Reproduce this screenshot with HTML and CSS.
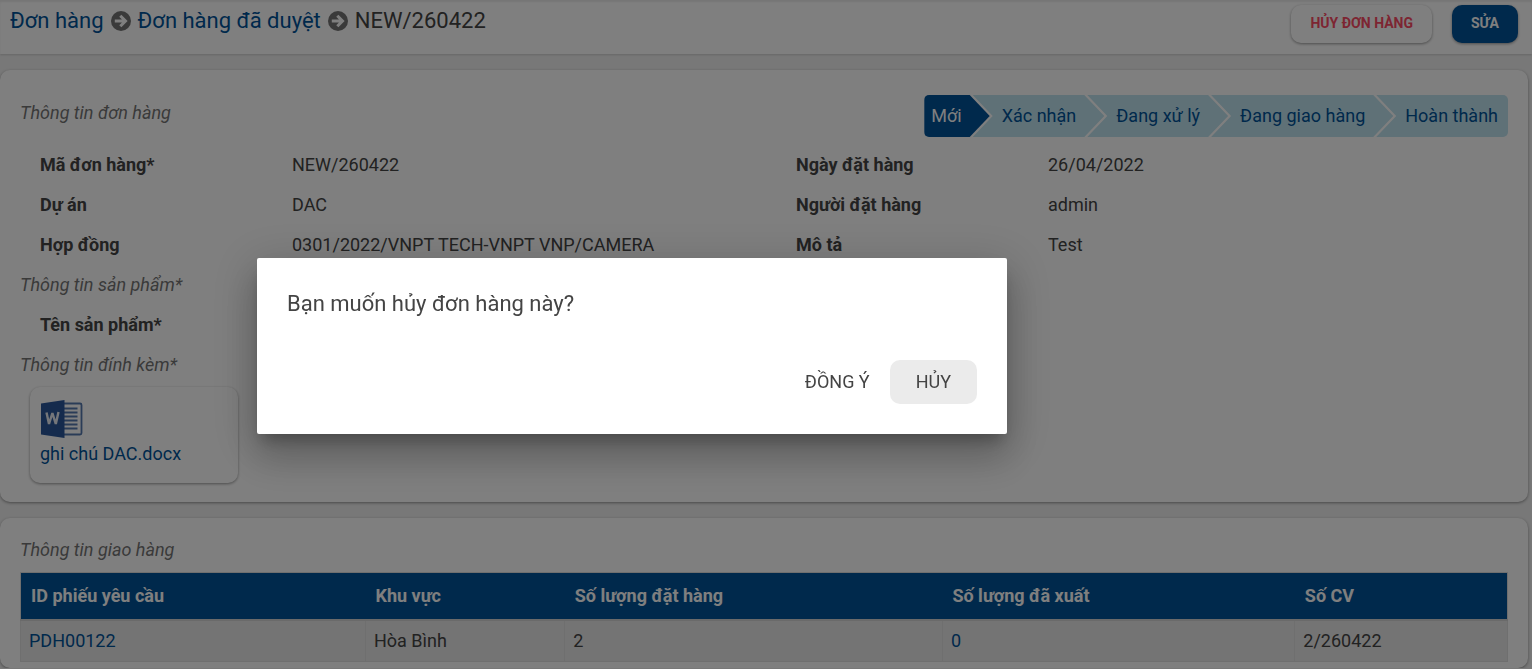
FILE: index.html
```html
<!DOCTYPE html>
<html lang="vi">
<head>
<meta charset="utf-8">
<title>NEW/260422</title>
<link rel="stylesheet" href="styles.css">
</head>
<body>
<header class="topbar">
  <nav class="breadcrumb" aria-label="Breadcrumb">
    <a href="#orders">Đơn hàng</a>
    <svg class="crumb-icon" viewBox="0 0 20 20" aria-hidden="true"><circle cx="10" cy="10" r="10"/><path d="M3.800 10H14M9.300 4.800l5.200 5.200-5.200 5.200"/></svg>
    <a href="#approved">Đơn hàng đã duyệt</a>
    <svg class="crumb-icon" viewBox="0 0 20 20" aria-hidden="true"><circle cx="10" cy="10" r="10"/><path d="M3.800 10H14M9.300 4.800l5.200 5.200-5.200 5.200"/></svg>
    <span>NEW/260422</span>
  </nav>
  <div class="actions">
    <button type="button" class="btn btn-danger">HỦY ĐƠN HÀNG</button>
    <button type="button" class="btn btn-primary">SỬA</button>
  </div>
</header>
<main class="content">
  <section class="card">
    <div class="card-head">
      <h2 class="section-title">Thông tin đơn hàng</h2>
      <ol class="steps">
        <li><button type="button" class="step step-first step-active" aria-current="step">Mới</button></li>
        <li><button type="button" class="step">Xác nhận</button></li>
        <li><button type="button" class="step">Đang xử lý</button></li>
        <li><button type="button" class="step">Đang giao hàng</button></li>
        <li><button type="button" class="step step-last">Hoàn thành</button></li>
      </ol>
    </div>
    <dl class="fields">
      <dt>Mã đơn hàng*</dt><dd>NEW/260422</dd>
      <dt>Ngày đặt hàng</dt><dd>26/04/2022</dd>
      <dt>Dự án</dt><dd>DAC</dd>
      <dt>Người đặt hàng</dt><dd>admin</dd>
      <dt>Hợp đồng</dt><dd>0301/2022/VNPT TECH-VNPT VNP/CAMERA</dd>
      <dt>Mô tả</dt><dd>Test</dd>
    </dl>
    <h2 class="section-title">Thông tin sản phẩm*</h2>
    <dl class="fields">
      <dt>Tên sản phẩm*</dt><dd></dd>
    </dl>
    <h2 class="section-title">Thông tin đính kèm*</h2>
    <a class="file" href="#file">
      <svg class="file-icon" viewBox="0 0 42 40" aria-hidden="true">
        <rect x="20" y="4.500" width="20.500" height="31" rx="1.500" fill="#fff" stroke="#2b579a" stroke-opacity=".8" stroke-width="1.800"/>
        <path d="M22 9.500h14.500M22 13.500h14.500M22 17.500h14.500M22 21.500h14.500M22 25.500h14.500M22 29.500h14.500" stroke="#2b579a" stroke-opacity=".8" stroke-width="2"/>
        <path d="M0 4.500L23.500 1v38L0 35.500z" fill="#2b579a"/>
        <path d="M5.500 13.500L8 25l3.400-11 3.400 11 2.700-12" fill="none" stroke="#e8edf5" stroke-width="2.400" stroke-linejoin="bevel"/>
      </svg>
      <span>ghi chú DAC.docx</span>
    </a>
  </section>
  <section class="card card-delivery">
    <h2 class="section-title">Thông tin giao hàng</h2>
    <table class="grid">
      <colgroup><col class="col-id"><col class="col-area"><col class="col-ordered"><col class="col-shipped"><col></colgroup>
      <thead>
        <tr><th scope="col">ID phiếu yêu cầu</th><th scope="col">Khu vực</th><th scope="col">Số lượng đặt hàng</th><th scope="col">Số lượng đã xuất</th><th scope="col">Số CV</th></tr>
      </thead>
      <tbody>
        <tr><td><a href="#PDH00122">PDH00122</a></td><td>Hòa Bình</td><td>2</td><td><a href="#shipped">0</a></td><td>2/260422</td></tr>
      </tbody>
    </table>
  </section>
</main>
<div class="overlay"></div>
<div class="dialog" role="dialog" aria-modal="true" aria-labelledby="dialog-title">
  <h1 class="dialog-title" id="dialog-title">Bạn muốn hủy đơn hàng này?</h1>
  <div class="dialog-actions">
    <button type="button" class="dialog-btn">ĐỒNG Ý</button>
    <button type="button" class="dialog-btn dialog-btn-cancel">HỦY</button>
  </div>
</div>
</body>
</html>
```
FILE: styles.css
```css
* { box-sizing: border-box; }

body {
  margin: 0;
  background: #f0f0f0;
  color: #444;
  font: 400 18px/24px Roboto, "Noto Sans", sans-serif;
}

a { color: #005298; text-decoration: none; }
button { font-family: inherit; cursor: pointer; }
h1, h2, dl, dd, ol { margin: 0; padding: 0; }

.topbar {
  display: flex;
  justify-content: space-between;
  align-items: flex-start;
  height: 54px;
  padding: 5px 14px 0 10px;
  background: #fff;
  box-shadow: 0 1px 2px rgba(0, 0, 0, .15), inset 0 2px 2px rgba(0, 0, 0, .08);
}

.breadcrumb {
  display: flex;
  align-items: center;
  gap: 7px;
  font-size: 22px;
  line-height: 32px;
}

.crumb-icon { width: 20px; height: 20px; fill: #757575; }
.crumb-icon path { fill: none; stroke: #fff; stroke-width: 3; }

.actions { display: flex; gap: 20px; }

.btn {
  height: 38px;
  padding: 0 19px 2px;
  border: 0;
  border-radius: 10px;
  font-size: 14px;
  font-weight: 700;
  box-shadow: 0 1px 3px rgba(0, 0, 0, .4);
}
.btn-danger { background: #fff; color: #fb4b64; }
.btn-primary { background: #005298; color: #fff; }

.content {
  display: flex;
  flex-direction: column;
  gap: 16px;
  padding: 16px 4px 0 0;
}

.card {
  padding: 25px 20px 19px;
  border-radius: 10px;
  background: #fff;
  box-shadow: 0 1px 3px rgba(0, 0, 0, .4);
}
.card-delivery { padding: 12px 20px 6px; }

.card-head {
  display: flex;
  justify-content: space-between;
  align-items: flex-start;
  height: 50px;
}
.card-head .section-title { line-height: 36px; }

.section-title {
  color: #757575;
  font-size: 18px;
  font-style: italic;
  font-weight: 400;
  line-height: 40px;
}

.steps { display: flex; list-style: none; }
.steps li + li { margin-left: -17px; }

.step {
  height: 42px;
  padding: 0 28px 2px 29px;
  border: 0;
  background: #bee2ee;
  color: #005298;
  font-size: 18px;
  clip-path: polygon(0 0, calc(100% - 20px) 0, 100% 50%, calc(100% - 20px) 100%, 0 100%, 20px 50%);
}
.step-first {
  padding-left: 7px;
  border-radius: 5px 0 0 5px;
  clip-path: polygon(0 0, calc(100% - 20px) 0, 100% 50%, calc(100% - 20px) 100%, 0 100%);
}
.step-last {
  padding-right: 10px;
  border-radius: 0 5px 5px 0;
  clip-path: polygon(0 0, 100% 0, 100% 100%, 0 100%, 20px 50%);
}
.step-active { background: #005298; color: #fff; }

.fields {
  display: grid;
  grid-template-columns: 63fr 126fr 63fr 115fr;
  padding-left: 20px;
  line-height: 40px;
}
.fields dt { font-weight: 700; }

.file {
  display: flex;
  flex-direction: column;
  gap: 3px;
  width: 208px;
  height: 96px;
  margin: 2px 0 0 10px;
  padding: 12px 10px;
  border-radius: 10px;
  box-shadow: 0 1px 3px rgba(0, 0, 0, .4);
}
.file-icon { width: 42px; height: 40px; margin-left: 1px; }

.grid {
  width: 100%;
  margin-top: 2px;
  border-collapse: collapse;
  table-layout: fixed;
  border: 1px solid #dedede;
}
.col-id { width: 23.2%; }
.col-area { width: 13.4%; }
.col-ordered { width: 25.4%; }
.col-shipped { width: 23.7%; }
.grid th {
  height: 47px;
  padding: 0 10px;
  background: #005298;
  color: #fff;
  text-align: left;
}
.grid thead { border-bottom: 2px solid #d4d4d4; }
.grid td {
  height: 42px;
  padding: 0 8px;
  border: 1px solid #dedede;
  background: #e8e8e8;
}

.overlay {
  position: fixed;
  inset: 0;
  background: rgba(0, 0, 0, .5);
}

.dialog {
  position: fixed;
  top: 258px;
  left: 257px;
  width: 750px;
  padding: 30px;
  border-radius: 2px;
  background: #fff;
  box-shadow: 0 24px 38px 3px rgba(0, 0, 0, .16), 0 9px 46px 8px rgba(0, 0, 0, .14), 0 11px 15px -5px rgba(0, 0, 0, .26);
}
.dialog-title {
  margin-bottom: 40px;
  font-size: 22px;
  font-weight: 400;
  line-height: 32px;
}
.dialog-actions {
  display: flex;
  justify-content: flex-end;
  gap: 20px;
}
.dialog-btn {
  height: 44px;
  padding: 0 0 2px;
  border: 0;
  border-radius: 10px;
  background: none;
  color: #444;
  font-size: 18px;
}
.dialog-btn-cancel { padding: 0 26px 2px; background: #ebebeb; }
```
